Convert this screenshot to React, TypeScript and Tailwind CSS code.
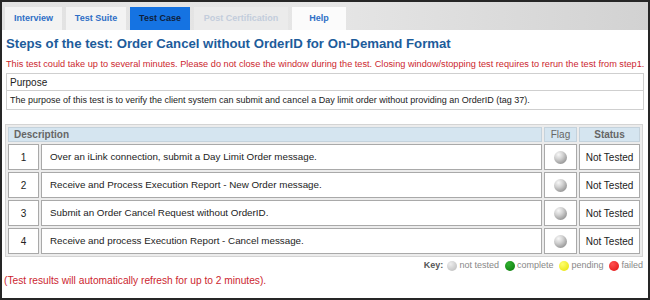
import React from "react";

const rows = [
  "Over an iLink connection, submit a Day Limit Order message.",
  "Receive and Process Execution Report - New Order message.",
  "Submit an Order Cancel Request without OrderID.",
  "Receive and process Execution Report - Cancel message.",
];

function Ball() {
  return (
    <span
      className="inline-block w-[13px] h-[13px] rounded-full"
      style={{ background: "radial-gradient(circle at 35% 28%, #f7f7f7 0%, #d2d2d2 35%, #9a9a9a 75%, #6e6e6e 100%)" }}
    />
  );
}

function Dot({ color }: { color: string }) {
  return (
    <span
      className="inline-block w-[10px] h-[10px] rounded-full mr-[2px]"
      style={{ background: color }}
    />
  );
}

export default function App() {
  return (
    <div
      className="w-[650px] h-[300px] overflow-hidden bg-white border-x-2 border-b-2 border-t-2 border-[#262626] box-border"
      style={{ fontFamily: '"Liberation Sans", Arial, sans-serif' }}
    >
      <div className="h-[28px] flex items-end gap-[4px] pl-[3px] bg-gradient-to-r from-[#e2e2e2] via-[#e6e6e6] to-[#d2d2d2]">
        <div className="w-[57px] h-[23px] flex items-center justify-center bg-[#f3f3f3] text-[9px] font-bold text-[#2f6fc6]">Interview</div>
        <div className="w-[60px] h-[23px] flex items-center justify-center bg-[#f3f3f3] text-[9px] font-bold text-[#2f6fc6]">Test Suite</div>
        <div className="w-[60px] h-[23px] flex items-center justify-center bg-[#1573e2] text-[9px] font-bold text-[#0f1f3c]">Test Case</div>
        <div className="w-[94px] h-[23px] flex items-center justify-center bg-[#ebebeb] text-[9px] font-bold text-[#c3cddc]">Post Certification</div>
        <div className="w-[54px] h-[23px] flex items-center justify-center bg-[#fbfbfb] text-[9px] font-bold text-[#2f6fc6]">Help</div>
      </div>

      <div className="mt-[5px] px-[4px] h-[18px] leading-[18px] text-[13.2px] font-bold text-[#1d5c9b] whitespace-nowrap">
        Steps of the test: Order Cancel without OrderID for On-Demand Format
      </div>
      <div className="mt-[5px] px-[4px] h-[12px] leading-[12px] text-[9.2px] text-[#cc1f2f] whitespace-nowrap">
        This test could take up to several minutes. Please do not close the window during the test. Closing window/stopping test requires to rerun the test from step1.
      </div>

      <div className="mt-[3px] mx-[4px] border border-[#cfcfcf]">
        <div className="h-[17px] leading-[17px] px-[3px] text-[10px] text-[#222] border-b border-[#cfcfcf]">Purpose</div>
        <div className="h-[18px] leading-[18px] px-[3px] text-[9px] text-[#222]">
          The purpose of this test is to verify the client system can submit and cancel a Day limit order without providing an OrderID (tag 37).
        </div>
      </div>

      <div className="mt-[14px] ml-[3px] w-[638px] border border-[#d4d4d4] bg-[#ececec]">
        <table className="w-full border-separate border-spacing-[2px] text-[10px] text-[#222]">
          <tbody>
            <tr>
              <td colSpan={2} className="h-[15px] bg-[#d5e5f0] px-[5px] font-bold text-[#666] border border-[#c4d2dc] leading-[13px]">Description</td>
              <td className="w-[33px] bg-[#d5e5f0] text-center text-[#666] border border-[#c4d2dc] leading-[13px]">Flag</td>
              <td className="w-[61px] bg-[#d5e5f0] text-center text-[#666] font-bold border border-[#c4d2dc] leading-[13px]">Status</td>
            </tr>
            {rows.map((r, i) => (
              <tr key={i}>
                <td className="w-[31px] h-[26px] bg-white border border-[#a9a9a9] text-center">{i + 1}</td>
                <td className="bg-white border border-[#a9a9a9] pl-[8px] text-[9.8px]">{r}</td>
                <td className="bg-white border border-[#a9a9a9] text-center align-middle">
                  <div className="flex items-center justify-center pt-[1px]"><Ball /></div>
                </td>
                <td className="bg-white border border-[#a9a9a9] text-center">Not Tested</td>
              </tr>
            ))}
          </tbody>
        </table>
      </div>

      <div className="mt-[3px] mr-[5px] flex justify-end items-center h-[12px] text-[9px] text-[#888]">
        <span className="font-bold text-[#555] mr-[4px]">Key:</span>
        <Dot color="radial-gradient(circle at 35% 30%, #eee, #b8b8b8)" />
        <span className="mr-[6px]">not tested</span>
        <Dot color="radial-gradient(circle at 35% 30%, #2fb02f, #0a7a0a)" />
        <span className="mr-[6px]">complete</span>
        <Dot color="radial-gradient(circle at 35% 30%, #ffff70, #e6e000)" />
        <span className="mr-[6px]">pending</span>
        <Dot color="radial-gradient(circle at 35% 30%, #ff5050, #e01010)" />
        <span>failed</span>
      </div>

      <div className="mt-[3px] ml-[2px] h-[12px] leading-[12px] text-[10.2px] text-[#cc1f2f] whitespace-nowrap">
        (Test results will automatically refresh for up to 2 minutes).
      </div>
    </div>
  );
}
